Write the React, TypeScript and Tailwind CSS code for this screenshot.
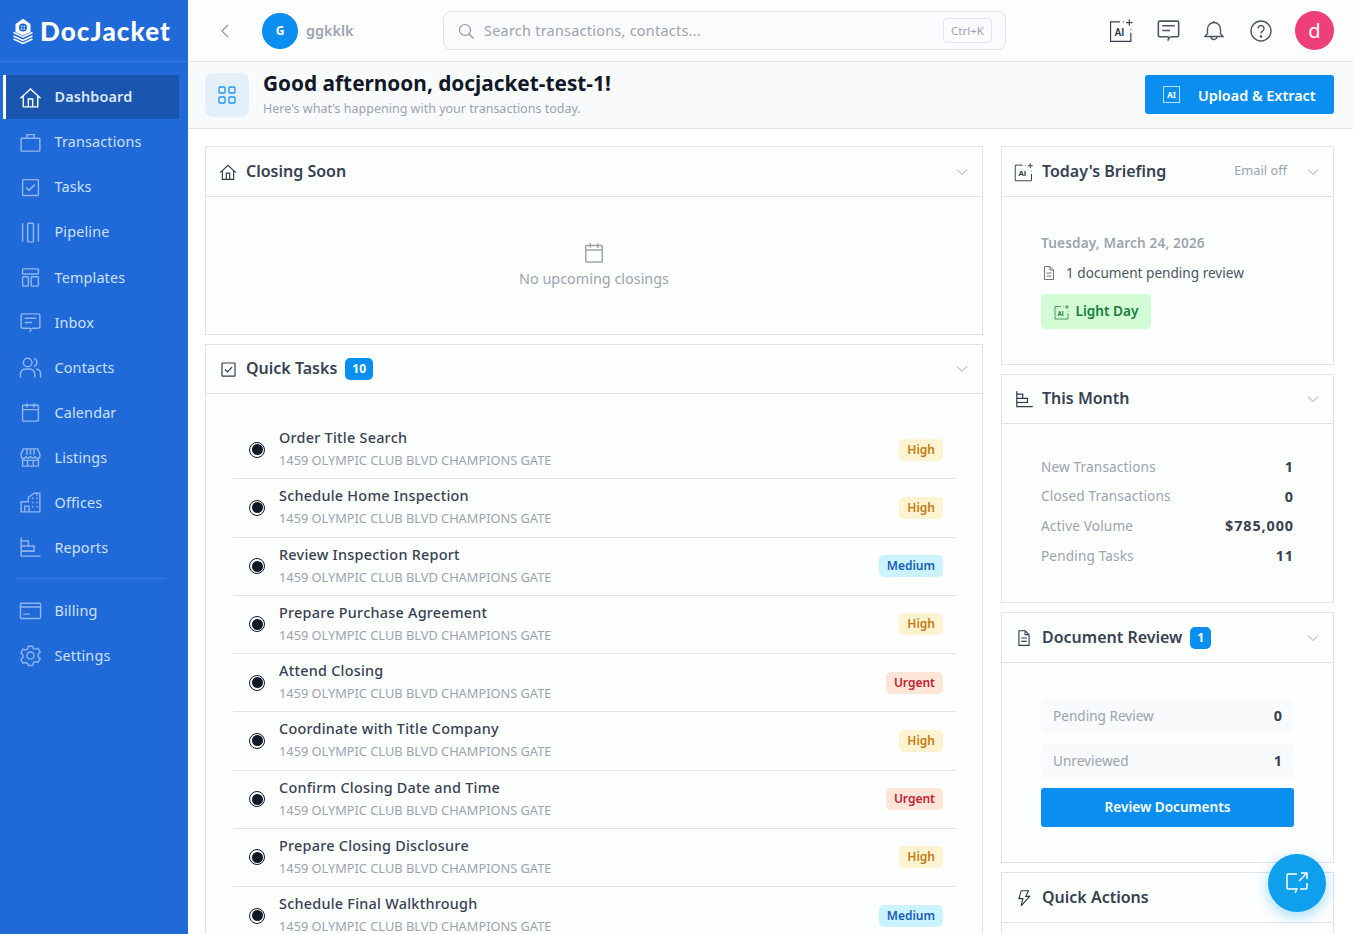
import type { ReactNode } from "react";

type IconProps = { className?: string };

function Svg({ className, children }: IconProps & { children: ReactNode }) {
  return (
    <svg viewBox="0 0 32 32" fill="none" stroke="currentColor" strokeWidth="2" className={className}>
      {children}
    </svg>
  );
}

const HomeIcon = ({ className }: IconProps) => (
  <Svg className={className}>
    <path d="M2 17 16 4l14 13" />
    <path d="M6 14v15h20V14" />
    <path d="M13 29V18h6v11" />
  </Svg>
);
const BriefcaseIcon = ({ className }: IconProps) => (
  <Svg className={className}>
    <rect x="3" y="10" width="26" height="18" rx="1" />
    <path d="M11 10V5h10v5" />
  </Svg>
);
const CheckboxIcon = ({ className }: IconProps) => (
  <Svg className={className}>
    <rect x="5" y="5" width="22" height="22" rx="1" />
    <path d="m10 16 4 4 8-8" />
  </Svg>
);
const ColumnsIcon = ({ className }: IconProps) => (
  <Svg className={className}>
    <path d="M5 3v26M27 3v26" />
    <rect x="12" y="3" width="8" height="26" rx="1" />
  </Svg>
);
const TemplateIcon = ({ className }: IconProps) => (
  <Svg className={className}>
    <rect x="5" y="4" width="22" height="7" rx="1" />
    <rect x="5" y="15" width="8" height="13" rx="1" />
    <rect x="17" y="15" width="10" height="13" rx="1" />
  </Svg>
);
const ChatIcon = ({ className }: IconProps) => (
  <Svg className={className}>
    <path d="M18 24h9a2 2 0 0 0 2-2V6a2 2 0 0 0-2-2H5a2 2 0 0 0-2 2v16a2 2 0 0 0 2 2h10l2 1-2 4" />
    <path d="M8 10h16M8 16h10" />
  </Svg>
);
const UsersIcon = ({ className }: IconProps) => (
  <Svg className={className}>
    <circle cx="12" cy="9" r="6" />
    <path d="M2 30v-5a7 7 0 0 1 7-7h6a7 7 0 0 1 7 7v5" />
    <path d="M21 3.4a6 6 0 0 1 0 11.2M24 18.2a7 7 0 0 1 6 6.8v5" />
  </Svg>
);
const CalendarIcon = ({ className }: IconProps) => (
  <Svg className={className}>
    <rect x="5" y="6" width="22" height="22" rx="1" />
    <path d="M5 12h22M11 3v6M21 3v6" />
  </Svg>
);
const StoreIcon = ({ className }: IconProps) => (
  <Svg className={className}>
    <path d="M3 11 6 4h20l3 7v3a3 3 0 0 1-6.5 0 3.3 3.3 0 0 1-6.5 0 3.3 3.3 0 0 1-6.5 0A3 3 0 0 1 3 14z" />
    <path d="M5 17v11h22V17M5 20h22M11 4v8M21 4v8M16 4v8M12 20v8M20 20v8" />
  </Svg>
);
const BuildingIcon = ({ className }: IconProps) => (
  <Svg className={className}>
    <path d="M3 29V15h10V9l8-6h8v26z" />
    <path d="M8 29v-8h6v8" />
    <path d="M18 10h2M24 10h2M18 16h2M24 16h2M18 22h2M24 22h2M24 5.500h2" />
  </Svg>
);
const ChartIcon = ({ className }: IconProps) => (
  <Svg className={className}>
    <path d="M3 2v26h27" />
    <path d="M3 7h10v7H3M3 14h18v7H3" />
    <path d="M3 21h18" />
  </Svg>
);
const CardIcon = ({ className }: IconProps) => (
  <Svg className={className}>
    <rect x="2" y="6" width="28" height="21" rx="1.500" />
    <path d="M2 11h28M6 21h9" />
  </Svg>
);
const GearIcon = ({ className }: IconProps) => (
  <Svg className={className}>
    <circle cx="16" cy="16" r="5" />
    <path d="m13 3-1 3.800-2.600 1.500-3.800-1.100-3 5.200 2.800 2.800v3.600l-2.800 2.800 3 5.200 3.800-1.100 2.600 1.500L13 29.800h6l1-3.800 2.600-1.500 3.800 1.100 3-5.200-2.800-2.800v-3.600l2.800-2.800-3-5.200-3.800 1.100L20 6.800 19 3z" />
  </Svg>
);
const DocIcon = ({ className }: IconProps) => (
  <Svg className={className}>
    <path d="M7 3h11l7 7v19H7z" />
    <path d="M18 3v7h7M11 16h10M11 22h10" />
  </Svg>
);
const BoltIcon = ({ className }: IconProps) => (
  <Svg className={className}>
    <path d="M11 3h13l-5 10h7L11 30l3-13H7z" />
  </Svg>
);
const ChevronDown = () => (
  <svg viewBox="0 0 12 12" fill="none" stroke="currentColor" strokeWidth="1" className="w-[12px] h-[12px] text-[#9ca3af]">
    <path d="m1 3.500 5 5 5-5" />
  </svg>
);
const AiSpark = ({ className }: IconProps) => (
  <svg viewBox="0 0 32 32" fill="none" stroke="currentColor" strokeWidth="1.500" className={className}>
    <path d="M14 5H2v25h26V19" />
    <path d="M26 2v8M22 6h8M18 5h1M28 14v1" />
    <text x="7" y="23" fontSize="13" fontWeight="700" fill="currentColor" stroke="none" fontFamily="Roboto, sans-serif">
      AI
    </text>
  </svg>
);
const Logo = () => (
  <svg viewBox="0 0 20 26" className="w-[20px] h-[26px] text-white" fill="none" stroke="currentColor">
    <path d="M10 .800 17.500 6v8L10 17.500 2.500 14V6z" fill="currentColor" stroke="none" />
    <circle cx="10" cy="9.500" r="4" fill="#1f69d9" stroke="none" />
    <circle cx="8.700" cy="8.500" r=".8" fill="#fff" stroke="none" />
    <circle cx="11.300" cy="8.500" r=".8" fill="#fff" stroke="none" />
    <circle cx="8.700" cy="11" r=".8" fill="#fff" stroke="none" />
    <circle cx="11.300" cy="11" r=".8" fill="#fff" stroke="none" />
    <path d="M.5 14.500 10 19l9.500-4.500M.5 18 10 22.500l9.500-4.500M.5 21 10 25.500l9.500-4.500" strokeWidth="1.400" />
  </svg>
);

const navTop = [
  { label: "Dashboard", icon: HomeIcon, active: true },
  { label: "Transactions", icon: BriefcaseIcon },
  { label: "Tasks", icon: CheckboxIcon },
  { label: "Pipeline", icon: ColumnsIcon },
  { label: "Templates", icon: TemplateIcon },
  { label: "Inbox", icon: ChatIcon },
  { label: "Contacts", icon: UsersIcon },
  { label: "Calendar", icon: CalendarIcon },
  { label: "Listings", icon: StoreIcon },
  { label: "Offices", icon: BuildingIcon },
  { label: "Reports", icon: ChartIcon },
];
const navBottom = [
  { label: "Billing", icon: CardIcon },
  { label: "Settings", icon: GearIcon },
];

function NavItem({ label, icon: Icon, active }: { label: string; icon: (p: IconProps) => ReactNode; active?: boolean }) {
  return (
    <div
      className={`ml-[3px] w-[176px] h-[44px] mb-[1.100px] flex items-center pl-[12.500px] gap-[13px] border-l-[3px] text-[14.400px] tracking-[0.15px] ${
        active ? "bg-[#1a55b0] border-white text-[#dbe7fa] font-semibold" : "border-transparent text-[#cfe0fb]"
      }`}
    >
      <Icon className={`w-[23px] h-[23px] ${active ? "text-white" : "text-[#8fb6f0]"}`} />
      <span>{label}</span>
    </div>
  );
}

function Sidebar() {
  return (
    <aside className="w-[188px] shrink-0 h-full bg-[#1f69d9]">
      <div className="h-[62px] flex items-center pl-[13px] gap-[7px] border-b border-[#3a7be0]">
        <Logo />
        <span className="text-white text-[26px] font-black font-['Lato'] tracking-[1.100px] leading-none">DocJacket</span>
      </div>
      <nav className="pt-[13px]">
        {navTop.map((n) => (
          <NavItem key={n.label} {...n} />
        ))}
        <div className="ml-[16px] w-[150px] h-px bg-[#3a7be0] mt-[8.500px] mb-[9px]" />
        {navBottom.map((n) => (
          <NavItem key={n.label} {...n} />
        ))}
      </nav>
    </aside>
  );
}

function TopBar() {
  return (
    <header className="h-[62px] shrink-0 flex items-center bg-[#fdfdfe] border-b border-[#e1e3eb] pr-[19px]">
      <svg viewBox="0 0 12 16" fill="none" stroke="currentColor" strokeWidth="1.200" className="ml-[31px] w-[12px] h-[16px] text-[#8b95a5]">
        <path d="M9 2 3 8l6 6" />
      </svg>
      <div className="ml-[31px] w-[36px] h-[36px] rounded-full bg-[#0a8ff0] text-white text-[12px] font-bold flex items-center justify-center">G</div>
      <span className="ml-[8px] w-[137px] text-[14.400px] font-semibold text-[#9ca3af]">ggkklk</span>
      <div className="w-[563px] h-[39px] flex items-center rounded-lg border border-[#e1e3eb] bg-[#fbfbfd] pl-[14px] pr-[13px]">
        <svg viewBox="0 0 16 16" fill="none" stroke="currentColor" strokeWidth="1.200" className="w-[16px] h-[16px] text-[#8b95a5]">
          <circle cx="7" cy="7" r="5.500" />
          <path d="m11 11 4.500 4.500" />
        </svg>
        <span className="ml-[10px] flex-1 text-[14.400px] tracking-[0.27px] text-[#9ca3af]">Search transactions, contacts...</span>
        <span className="w-[49px] h-[25px] flex items-center justify-center rounded border border-[#e1e3eb] text-[11.500px] text-[#9ca3af]">Ctrl+K</span>
      </div>
      <div className="ml-auto flex items-center">
        <AiSpark className="w-[25px] h-[25px] text-[#374151]" />
        <ChatIcon className="ml-[21.500px] w-[25px] h-[25px] text-[#4b5563]" />
        <svg viewBox="0 0 22 22" fill="none" stroke="currentColor" strokeWidth="1.400" className="ml-[22.500px] w-[22px] h-[22px] text-[#4b5563]">
          <path d="M2 16.500 4.500 13.500V9a6.500 6.500 0 0 1 13 0v4.500l2.500 3z" />
          <path d="M8 16.500a3 3 0 0 0 6 0M11 1v1.500" />
        </svg>
        <svg viewBox="0 0 22 22" fill="none" stroke="currentColor" strokeWidth="1.400" className="ml-[25px] w-[22px] h-[22px] text-[#4b5563]">
          <circle cx="11" cy="11" r="10" />
          <path d="M8 8.500a3 3 0 1 1 4.500 2.600c-1 .6-1.500 1.200-1.500 2.400" />
          <circle cx="11" cy="16.500" r=".6" fill="currentColor" />
        </svg>
        <div className="ml-[23px] w-[39px] h-[39px] rounded-full bg-[#ee3f7a] text-white text-[20px] flex items-center justify-center">d</div>
      </div>
    </header>
  );
}

function PageHead() {
  return (
    <div className="h-[67px] shrink-0 flex items-center bg-[#f9fafc] border-b border-[#e1e3eb] pl-[17px] pr-[19px]">
      <div className="w-[44px] h-[44px] rounded-lg bg-[#e3eff9] flex items-center justify-center">
        <svg viewBox="0 0 18 18" fill="none" stroke="#1e95f2" strokeWidth="1.300" className="w-[18px] h-[18px]">
          <rect x="1" y="1" width="6" height="6" rx="1" />
          <rect x="11" y="1" width="6" height="6" rx="1" />
          <rect x="1" y="11" width="6" height="6" rx="1" />
          <rect x="11" y="11" width="6" height="6" rx="1" />
        </svg>
      </div>
      <div className="ml-[14px]">
        <div className="text-[20.800px] leading-[26px] font-bold text-[#111827]">Good afternoon, docjacket-test-1!</div>
        <div className="mt-[1px] text-[12.500px] leading-[24px] text-[#9ca3af]">Here's what's happening with your transactions today.</div>
      </div>
      <button className="ml-auto mb-[1px] pt-[2px] w-[189px] h-[39px] rounded-[3px] bg-[#0a8ff0] text-white flex items-center pl-[18px] gap-[18px] text-[14.400px] font-semibold">
        <span className="w-[17px] h-[17px] mb-[2px] border border-[#b9defb] flex items-center justify-center text-[8px] font-bold">AI</span>
        Upload &amp; Extract
      </button>
    </div>
  );
}

function Card({
  icon,
  title,
  count,
  extra,
  tight,
  children,
}: {
  icon: ReactNode;
  title: string;
  count?: number;
  extra?: string;
  tight?: boolean;
  children?: ReactNode;
}) {
  return (
    <section className="border border-[#e1e3eb] bg-[#fdfefe]">
      <div className={`${tight ? "h-[49px]" : "h-[50px]"} flex items-center border-b border-[#e1e3eb] pl-[12px] pr-[14px]`}>
        <span className="w-[20px] flex justify-center text-[#2f3a4a]">{icon}</span>
        <span className="ml-[8px] mb-[2px] text-[16px] font-semibold text-[#374151]">{title}</span>
        {count !== undefined && (
          <span className="ml-[8px] px-[7px] h-[22px] rounded-[5px] bg-[#0a8ff0] text-white text-[12px] font-bold flex items-center">{count}</span>
        )}
        {extra && <span className="ml-auto mr-[20px] mb-[2px] text-[12.800px] text-[#9ca3af]">{extra}</span>}
        <span className={extra ? "" : "ml-auto"}>
          <ChevronDown />
        </span>
      </div>
      {children}
    </section>
  );
}

const address = "1459 OLYMPIC CLUB BLVD CHAMPIONS GATE";
const tasks = [
  ["Order Title Search", "High"],
  ["Schedule Home Inspection", "High"],
  ["Review Inspection Report", "Medium"],
  ["Prepare Purchase Agreement", "High"],
  ["Attend Closing", "Urgent"],
  ["Coordinate with Title Company", "High"],
  ["Confirm Closing Date and Time", "Urgent"],
  ["Prepare Closing Disclosure", "High"],
  ["Schedule Final Walkthrough", "Medium"],
];
const badgeStyles: Record<string, string> = {
  High: "bg-[#fef3d0] text-[#c47a10]",
  Medium: "bg-[#cbf2ff] text-[#1a5fb4]",
  Urgent: "bg-[#fee5d8] text-[#c02030]",
};

function TaskRow({ title, priority }: { title: string; priority: string }) {
  return (
    <div className="h-[58.250px] flex items-center border-b border-[#e1e3eb] pl-[16px] pr-[13px]">
      <span className="w-[16px] h-[16px] rounded-full border border-[#111827] p-[1.500px] flex">
        <span className="flex-1 rounded-full bg-[#111827]" />
      </span>
      <div className="ml-[14px] mb-[1px]">
        <div className="text-[14.400px] leading-[22px] tracking-[0.25px] font-medium text-[#374151]">{title}</div>
        <div className="text-[12.800px] leading-[22px] text-[#9ca3af]">{address}</div>
      </div>
      <span className={`ml-auto h-[22px] px-[8px] rounded-[5px] flex items-center text-[12px] font-semibold ${badgeStyles[priority]}`}>{priority}</span>
    </div>
  );
}

function Stat({ label, value }: { label: string; value: string }) {
  return (
    <div className="h-[29.700px] flex items-center justify-between text-[13.600px] tracking-[0.15px]">
      <span className="text-[#9ca3af]">{label}</span>
      <span className="text-[14.400px] tracking-[0.9px] font-bold text-[#374151]">{value}</span>
    </div>
  );
}

function ReviewStat({ label, value }: { label: string; value: string }) {
  return (
    <div className="h-[36px] mb-[9px] rounded-md bg-[#f9fafc] flex items-center justify-between px-[12px] text-[13.600px]">
      <span className="text-[#9ca3af]">{label}</span>
      <span className="text-[14.400px] font-bold text-[#374151]">{value}</span>
    </div>
  );
}

export default function App() {
  return (
    <div className="h-screen w-full flex overflow-hidden bg-white font-['Noto_Sans',sans-serif]">
      <Sidebar />
      <main className="flex-1 min-w-0 flex flex-col">
        <TopBar />
        <PageHead />
        <div className="flex-1 overflow-hidden pl-[17px] pr-[19px] pt-[17px] flex gap-[18px] items-start">
          <div className="w-[778px] shrink-0 flex flex-col gap-[9px]">
            <Card icon={<HomeIcon className="w-[18px] h-[18px]" />} title="Closing Soon">
              <div className="h-[137px] flex flex-col items-center justify-center">
                <CalendarIcon className="w-[24px] h-[24px] text-[#9ca3af]" />
                <span className="mt-[3px] text-[14.400px] text-[#9ca3af]">No upcoming closings</span>
              </div>
            </Card>
            <Card icon={<CheckboxIcon className="w-[19px] h-[19px]" />} title="Quick Tasks" count={10} tight>
              <div className="pl-[27px] pr-[26px] pt-[27px]">
                {tasks.map(([title, priority]) => (
                  <TaskRow key={title} title={title} priority={priority} />
                ))}
              </div>
            </Card>
          </div>
          <div className="w-[333px] shrink-0 flex flex-col gap-[9px]">
            <Card icon={<AiSpark className="w-[20px] h-[20px]" />} title="Today's Briefing" extra="Email off">
              <div className="h-[167px] px-[39px] pt-[35px]">
                <div className="text-[13.600px] leading-[22px] tracking-[0.15px] font-semibold text-[#9ca3af]">Tuesday, March 24, 2026</div>
                <div className="mt-[8px] flex items-center gap-[9px] text-[13.600px] leading-[22px] text-[#4b5563]">
                  <DocIcon className="w-[16px] h-[16px] text-[#6b7280]" />
                  1 document pending review
                </div>
                <div className="mt-[10px] w-[110px] h-[35px] rounded-[5px] bg-[#d3fbd4] text-[#15803d] text-[13.600px] font-semibold flex items-center justify-center gap-[6px]">
                  <AiSpark className="w-[16px] h-[16px]" />
                  Light Day
                </div>
              </div>
            </Card>
            <Card icon={<ChartIcon className="w-[19px] h-[19px]" />} title="This Month" tight>
              <div className="h-[178px] px-[39px] pt-[28px]">
                <Stat label="New Transactions" value="1" />
                <Stat label="Closed Transactions" value="0" />
                <Stat label="Active Volume" value="$785,000" />
                <Stat label="Pending Tasks" value="11" />
              </div>
            </Card>
            <Card icon={<DocIcon className="w-[18px] h-[18px]" />} title="Document Review" count={1}>
              <div className="h-[199px] px-[39px] pt-[35px]">
                <ReviewStat label="Pending Review" value="0" />
                <ReviewStat label="Unreviewed" value="1" />
                <button className="w-full h-[39px] rounded-[3px] bg-[#0a8ff0] text-white text-[13.600px] font-semibold">Review Documents</button>
              </div>
            </Card>
            <Card icon={<BoltIcon className="w-[18px] h-[18px]" />} title="Quick Actions">
              <div className="h-[120px]" />
            </Card>
          </div>
        </div>
      </main>
      <button className="fixed left-[1268px] top-[854px] w-[58px] h-[58px] rounded-full bg-[#0ea0ec] shadow-[0_4px_14px_rgba(14,160,236,0.4)] flex items-center justify-center text-white">
        <svg viewBox="0 0 24 24" fill="none" stroke="currentColor" strokeWidth="1.500" className="w-[24px] h-[24px]">
          <path d="M12 3H3a1 1 0 0 0-1 1v13a1 1 0 0 0 1 1h9l-2 4M15 18h6a1 1 0 0 0 1-1v-5" />
          <path d="M14 10l8-8M16 2h6v6" />
        </svg>
      </button>
    </div>
  );
}
